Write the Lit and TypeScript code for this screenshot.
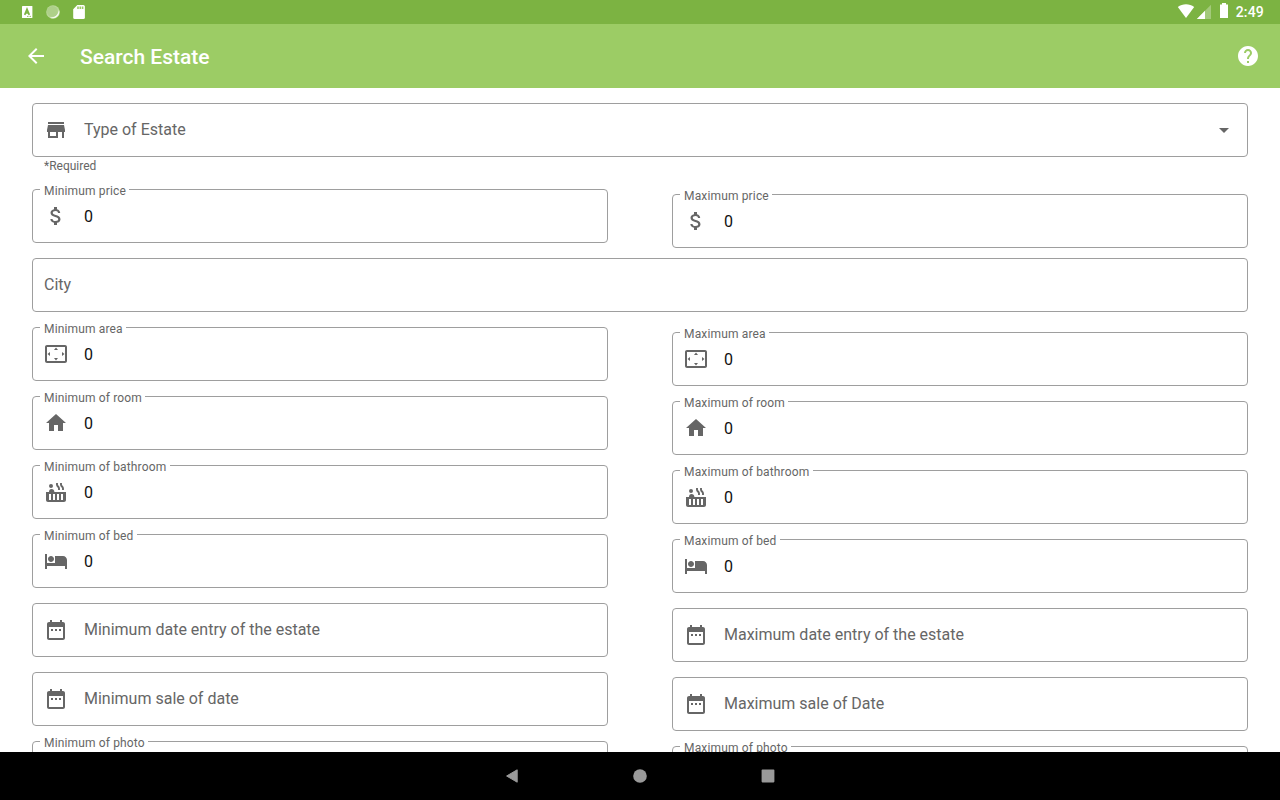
import { LitElement, html, css, svg, nothing } from "lit";
import { customElement, property } from "lit/decorators.js";

const ICONS: Record<string, string> = {
  store: "M20 4H4v2h16V4zm1 10v-2l-1-5H4l-1 5v2h1v6h10v-6h4v6h2v-6h1zm-9 4H6v-4h6v4z",
  money: "M11.8 10.9c-2.27-.59-3-1.2-3-2.15 0-1.09 1.01-1.85 2.7-1.85 1.78 0 2.44.85 2.5 2.1h2.21c-.07-1.72-1.12-3.3-3.21-3.81V3h-3v2.16c-1.94.42-3.5 1.68-3.5 3.61 0 2.31 1.91 3.46 4.7 4.13 2.5.6 3 1.48 3 2.41 0 .69-.49 1.79-2.7 1.79-2.06 0-2.87-.92-2.98-2.1h-2.2c.12 2.19 1.76 3.42 3.68 3.83V21h3v-2.15c1.95-.37 3.5-1.5 3.5-3.55 0-2.84-2.43-3.81-4.7-4.4z",
  area: "M12.01 5.5L10 8h4l-1.99-2.5zM18 10v4l2.5-1.99L18 10zM6 10l-2.5 2.01L6 14v-4zm8 6h-4l2.01 2.5L14 16zm7-13H3c-1.1 0-2 .9-2 2v14c0 1.1.9 2 2 2h18c1.1 0 2-.9 2-2V5c0-1.1-.9-2-2-2zm0 16.01H3V4.99h18v14.02z",
  home: "M10 20v-6h4v6h5v-8h3L12 3 2 12h3v8z",
  bath: "M9 6a2 2 0 1 1-4 0a2 2 0 0 1 4 0zM10.4 12c0-1.7-1.2-3-2.9-3C5.9 9 5 10.2 5 12H2v8c0 1.1.9 2 2 2h16c1.1 0 2-.9 2-2v-8H10.4zM7 20H5v-6h2v6zm4 0H9v-6h2v6zm4 0h-2v-6h2v6zm4 0h-2v-6h2v6zm-.35-14.14l-.07-.07c-.57-.62-.82-1.41-.67-2.2L18 3h-1.89l-.06.43c-.2 1.36.27 2.71 1.3 3.72l.07.06c.57.62.82 1.41.67 2.2l-.11.59h1.91l.06-.43c.21-1.36-.27-2.71-1.3-3.71zm-4 0l-.07-.07c-.57-.62-.82-1.41-.67-2.2L14 3h-1.89l-.06.43c-.2 1.36.27 2.71 1.3 3.72l.07.06c.57.62.82 1.41.67 2.2l-.11.59h1.91l.06-.43c.21-1.36-.27-2.71-1.3-3.71z",
  bed: "M7 13c1.66 0 3-1.34 3-3S8.66 7 7 7s-3 1.34-3 3 1.34 3 3 3zm12-6h-8v7H3V5H1v15h2v-3h18v3h2v-9c0-2.21-1.79-4-4-4z",
  date: "M9 11H7v2h2v-2zm4 0h-2v2h2v-2zm4 0h-2v2h2v-2zm2-7h-1V2h-2v2H8V2H6v2H5c-1.11 0-1.99.9-1.99 2L3 20c0 1.1.89 2 2 2h14c1.1 0 2-.9 2-2V6c0-1.1-.9-2-2-2zm0 16H5V9h14v11z",
  back: "M20 11H7.83l5.59-5.59L12 4l-8 8 8 8 1.41-1.41L7.83 13H20v-2z",
  help: "M12 2C6.48 2 2 6.48 2 12s4.48 10 10 10 10-4.48 10-10S17.52 2 12 2zm1 17h-2v-2h2v2zm2.07-7.75l-.9.92C13.45 12.9 13 13.5 13 15h-2v-.5c0-1.1.45-2.1 1.17-2.83l1.24-1.26c.37-.36.59-.86.59-1.41 0-1.1-.9-2-2-2s-2 .9-2 2H8c0-2.21 1.79-4 4-4s4 1.79 4 4c0 .88-.36 1.68-.93 2.25z",
  drop: "M7 10l5 5 5-5z",
};

const icon = (name: string) =>
  html`<svg class="icon" width="24" height="24" viewBox="0 0 24 24" fill="currentColor">${svg`<path d=${ICONS[name]}></path>`}</svg>`;

@customElement("outlined-field")
class OutlinedField extends LitElement {
  @property() label = "";
  @property() icon = "";
  @property() value = "";
  @property() hint = "";
  @property({ type: Boolean }) dropdown = false;

  static styles = css`
    :host { display: block; }
    .box {
      position: relative;
      box-sizing: border-box;
      height: 54px;
      border: 1px solid #9e9e9e;
      border-radius: 4px;
      padding: 0 11px;
      display: flex;
      align-items: center;
      gap: 16px;
      font-size: 16px;
      color: #666;
    }
    .icon { display: block; flex: none; }
    .text { flex: 1; line-height: 20px; white-space: nowrap; }
    .value { color: #111; padding-top: 2px; }
    .float {
      position: absolute;
      left: 7px;
      top: -6px;
      padding: 0 3.5px 0 4px;
      background: #fff;
      font-size: 12px;
      line-height: 14px;
      letter-spacing: 0.15px;
      white-space: nowrap;
    }
    .hint { height: 17px; padding: 0 12px; font-size: 12px; line-height: 18px; color: #666; }
  `;

  render() {
    return html`
      <div class="box">
        ${this.value ? html`<span class="float">${this.label}</span>` : nothing}
        ${this.icon ? icon(this.icon) : nothing}
        <span class="text ${this.value ? "value" : ""}">${this.value || this.label}</span>
        ${this.dropdown ? icon("drop") : nothing}
      </div>
      ${this.hint ? html`<div class="hint">${this.hint}</div>` : nothing}
    `;
  }
}

@customElement("app-root")
class AppRoot extends LitElement {
  static styles = css`
    :host {
      display: flex;
      flex-direction: column;
      width: 100%;
      height: 100vh;
      overflow: hidden;
      background: #fff;
      font-family: Roboto, sans-serif;
    }
    svg { display: block; }
    .status {
      flex: none;
      height: 24px;
      background: #7cb342;
      display: flex;
      justify-content: space-between;
      color: #fff;
    }
    .clock {
      padding-right: 16px;
      font-size: 14px;
      font-weight: 500;
      line-height: 25px;
      letter-spacing: 0.2px;
    }
    .right { display: flex; }
    .bar {
      flex: none;
      box-sizing: border-box;
      height: 64px;
      padding: 0 20px 0 24px;
      background: #9ccc65;
      color: #fff;
      display: flex;
      align-items: center;
    }
    .title { flex: 1; padding-left: 32px; font-size: 21px; font-weight: 500; line-height: 24px; padding-top: 1px; }
    .form {
      flex: 1;
      min-height: 0;
      overflow: hidden;
      padding: 15px 32px 0;
      display: flex;
      flex-direction: column;
      gap: 15px;
    }
    .row { flex: none; display: grid; grid-template-columns: 1fr 1fr; column-gap: 64px; }
    .row .max { margin: 5px 0 -5px; }
    .nav { flex: none; height: 48px; background: #000; display: flex; justify-content: center; }
  `;

  private rows = [
    { icon: "area", min: "Minimum area", max: "Maximum area", value: "0" },
    { icon: "home", min: "Minimum of room", max: "Maximum of room", value: "0" },
    { icon: "bath", min: "Minimum of bathroom", max: "Maximum of bathroom", value: "0" },
    { icon: "bed", min: "Minimum of bed", max: "Maximum of bed", value: "0" },
    { icon: "date", min: "Minimum date entry of the estate", max: "Maximum date entry of the estate", value: "" },
    { icon: "date", min: "Minimum sale of date", max: "Maximum sale of Date", value: "" },
    { icon: "", min: "Minimum of photo", max: "Maximum of photo", value: " " },
  ];

  private pair(r: { icon: string; min: string; max: string; value: string }) {
    return html`<div class="row">
      <outlined-field icon=${r.icon} label=${r.min} value=${r.value}></outlined-field>
      <outlined-field class="max" icon=${r.icon} label=${r.max} value=${r.value}></outlined-field>
    </div>`;
  }

  render() {
    return html`
      <div class="status">
        <svg width="100" height="24" viewBox="0 0 100 24">
          <rect x="22" y="6" width="10.4" height="12" rx="0.6" fill="#fff" />
          <path d="M24.7 14.8L27 9.3L29.3 14.8M25.5 13H28.5" fill="none" stroke="#7cb342" stroke-width="1.7" />
          <path d="M27 16.4H31" stroke="#7cb342" stroke-width="0.8" stroke-dasharray="1 0.5" />
          <circle cx="53" cy="12" r="6.8" fill="#b9d896" />
          <path d="M59 9.8A6.4 6.4 0 0 1 49.8 17.4A8.5 8.5 0 0 0 59 9.8z" fill="#f4f9ee" />
          <circle cx="52.4" cy="11.4" r="5.4" fill="#aed089" />
          <path d="M77.3 5H83.4A1.5 1.5 0 0 1 84.9 6.5V17.5A1.5 1.5 0 0 1 83.4 19H74.7A1.5 1.5 0 0 1 73.2 17.5V9.2z" fill="#fff" />
          <path d="M78 6.6V9M80.3 6.6V9M82.6 6.6V9" stroke="#9ccc65" stroke-width="1.6" />
        </svg>
        <div class="right">
          <svg width="60" height="24" viewBox="1176 0 60 24" fill="#fff">
            <path d="M1177.8 7.1C1182.5 3.4 1189.5 3.4 1194.2 7.1L1186 18z" />
            <path d="M1211 4.8V19H1196.8z" fill-opacity=".3" />
            <path d="M1205 10.8V19H1196.8z" />
            <path d="M1222 3h4v1.4h2V18h-8V4.4h2z" />
          </svg>
          <div class="clock">2:49</div>
        </div>
      </div>
      <div class="bar">${icon("back")}<div class="title">Search Estate</div>${icon("help")}</div>
      <div class="form">
        <outlined-field icon="store" label="Type of Estate" hint="*Required" dropdown></outlined-field>
        ${this.pair({ icon: "money", min: "Minimum price", max: "Maximum price", value: "0" })}
        <outlined-field label="City"></outlined-field>
        ${this.rows.map((r) => this.pair(r))}
      </div>
      <div class="nav">
        <svg width="280" height="48" viewBox="500 752 280 48" fill="#999">
          <path d="M506.6 776L517.2 769.8V782.2z" stroke="#999" stroke-width="1" stroke-linejoin="round" />
          <circle cx="640" cy="776" r="6.8" />
          <rect x="761.6" y="769.6" width="12.8" height="12.8" rx="0.8" />
        </svg>
      </div>
    `;
  }
}
